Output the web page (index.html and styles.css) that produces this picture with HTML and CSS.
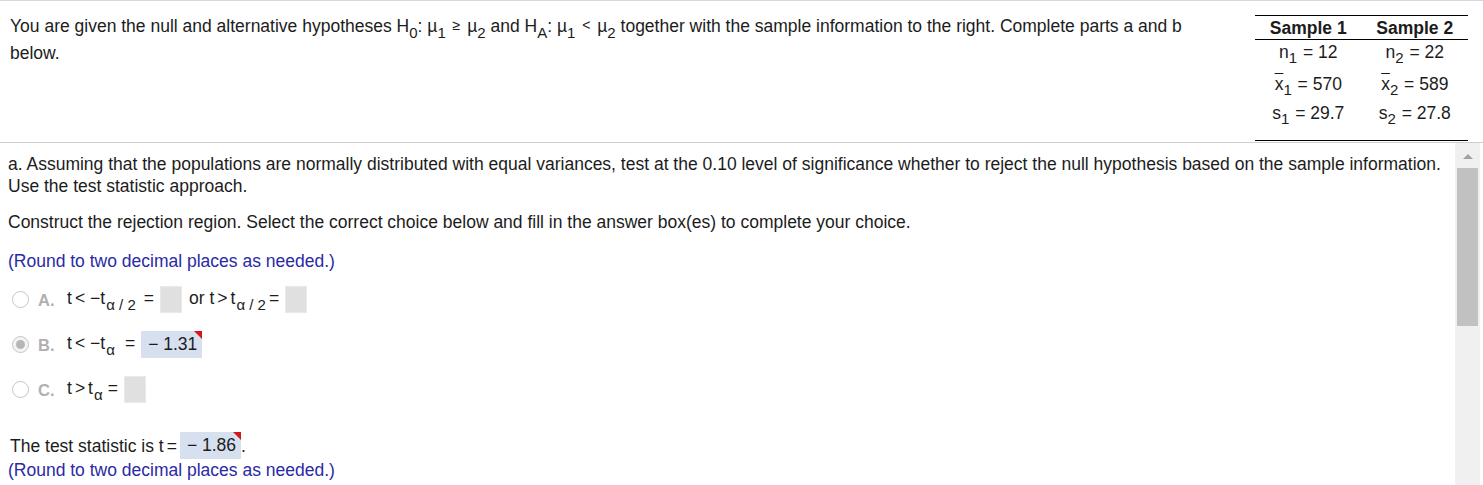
FILE: index.html
```html
<!DOCTYPE html>
<html>
<head>
<meta charset="utf-8">
<link rel="stylesheet" href="styles.css">
</head>
<body>
<div class="page">
  <header class="header">
    <p class="intro">You are given the null and alternative hypotheses H<span class="sub">0</span>: µ<span class="sub">1</span> <span class="rel">≥</span> µ<span class="sub">2</span> and H<span class="sub">A</span>: µ<span class="sub">1</span> <span class="rel">&lt;</span> µ<span class="sub">2</span> together with the sample information to the right. Complete parts a and b below.</p>
    <table class="samples">
      <thead>
        <tr><th>Sample 1</th><th>Sample 2</th></tr>
      </thead>
      <tbody>
        <tr class="row-n"><td>n<span class="tsub">1</span> = 12</td><td>n<span class="tsub">2</span> = 22</td></tr>
        <tr class="row-x"><td><span class="bar">x</span><span class="tsub">1</span> = 570</td><td><span class="bar">x</span><span class="tsub">2</span> = 589</td></tr>
        <tr class="row-s"><td>s<span class="tsub">1</span> = 29.7</td><td>s<span class="tsub">2</span> = 27.8</td></tr>
      </tbody>
    </table>
  </header>
  <section class="work">
    <div class="content">
      <p class="question">a. Assuming that the populations are normally distributed with equal variances, test at the 0.10 level of significance whether to reject the null hypothesis based on the sample information. Use the test statistic approach.</p>
      <p class="prompt">Construct the rejection region. Select the correct choice below and fill in the answer box(es) to complete your choice.</p>
      <p class="hint hint-top">(Round to two decimal places as needed.)</p>
      <div class="options">
        <div class="option">
          <span class="radio"></span><span class="letter">A.</span>
          <span class="expr">t<span class="op">&lt;</span><span class="minus">−</span>t<span class="asub">α / 2</span><span class="eq">=</span></span><span class="box"></span>
          <span class="expr or">or t<span class="op2">&gt;</span>t<span class="asub">α / 2</span><span class="eq tighter">=</span></span><span class="box"></span>
        </div>
        <div class="option">
          <span class="radio checked"></span><span class="letter">B.</span>
          <span class="expr">t<span class="op">&lt;</span><span class="minus">−</span>t<span class="asub single">α</span><span class="eq">=</span></span><span class="answer">− 1.31</span>
        </div>
        <div class="option">
          <span class="radio"></span><span class="letter">C.</span>
          <span class="expr">t<span class="op2">&gt;</span>t<span class="asub">α</span><span class="eq tight">=</span></span><span class="box"></span>
        </div>
      </div>
      <div class="statistic">The test statistic is t<span class="eq">=</span><span class="answer">− 1.86</span>.</div>
      <p class="hint">(Round to two decimal places as needed.)</p>
    </div>
    <div class="scrollbar">
      <div class="arrow"></div>
      <div class="thumb"></div>
    </div>
  </section>
</div>
</body>
</html>
```

FILE: styles.css
```css
html, body {
  margin: 0;
  padding: 0;
  background: #fff;
}
body {
  font-family: "Liberation Sans", Arial, sans-serif;
  font-size: 17.5px;
  color: #1c1c1c;
  overflow: hidden;
}
.page {
  border-top: 1px solid #d3d7e2;
  height: 484px;
  display: flex;
  flex-direction: column;
}
.header {
  display: flex;
  justify-content: space-between;
  align-items: flex-start;
  padding: 0 15px 0 10px;
  height: 141px;
  flex: none;
}
.intro {
  margin: 12px 0 0 0;
  line-height: 26px;
  flex: 1;
  padding-right: 50px;
}
.sub {
  font-size: 15px;
  line-height: 1;
  vertical-align: -6px;
}
.rel {
  font-size: 14px;
  line-height: 1;
  vertical-align: 2px;
  margin: 0 2px;
}
.samples {
  border-collapse: collapse;
  margin-top: 14px;
  width: 213px;
  flex: none;
}
.samples thead th {
  font-weight: bold;
  border-top: 1px solid #000;
  border-bottom: 1px solid #000;
  line-height: 20px;
  padding: 2px 0 1px;
  text-align: center;
}
.samples td {
  text-align: center;
  line-height: 20px;
  padding: 2px 0 4px;
  white-space: nowrap;
}
.samples tr.row-x td {
  padding: 5px 0 4px;
}
.samples tr.row-s td {
  padding: 2px 0 14px;
  border-bottom: 1px solid #000;
}
.tsub {
  font-size: 15px;
  line-height: 1;
  vertical-align: -5px;
  margin-right: 1px;
}
.bar {
  text-decoration: overline;
  text-decoration-thickness: 1px;
}
.work {
  flex: 1;
  display: flex;
  border-top: 1px solid #cfcfcf;
  min-height: 0;
}
.content {
  flex: 1;
  padding: 10px 2px 0 8px;
  line-height: 22px;
}
.content p {
  margin: 0;
}
.prompt {
  margin-top: 14px !important;
}
.hint {
  color: #2a2aa5;
}
.hint-top {
  margin-top: 17px !important;
}
.options {
  margin-top: 14px;
  display: flex;
  flex-direction: column;
  gap: 18px;
}
.option {
  display: flex;
  align-items: center;
  height: 27px;
}
.radio {
  width: 17px;
  height: 17px;
  border: 1px solid #c6c6c6;
  border-radius: 50%;
  margin-left: 4px;
  box-sizing: border-box;
  display: flex;
  align-items: center;
  justify-content: center;
  background: #fff;
  flex: none;
}
.radio.checked {
  background: #f4f4f4;
}
.radio.checked::after {
  content: "";
  width: 9px;
  height: 9px;
  border-radius: 50%;
  background: #b6b6b6;
}
.letter {
  color: #b0b0b0;
  font-weight: bold;
  font-size: 16.5px;
  margin-left: 9px;
  width: 29px;
}
.expr {
  white-space: nowrap;
}
.op {
  margin: 0 5px 0 3px;
}
.op2 {
  margin: 0 3px 0 3px;
}
.asub {
  font-size: 15px;
  line-height: 1;
  vertical-align: -6px;
  margin-left: 1px;
}
.asub.single {
  margin-right: 2px;
}
.eq {
  margin: 0 6px 0 8px;
}
.eq.tight {
  margin-left: 5px;
}
.eq.tighter {
  margin-left: 3px;
}
.box {
  display: inline-block;
  width: 22px;
  height: 27px;
  background: #e0e0e0;
  border: 1px solid #e9e9e9;
  box-sizing: border-box;
  margin-left: 0;
}
.or {
  margin-left: 7px;
}
.answer {
  display: inline-block;
  position: relative;
  background: #d6e0ef;
  height: 27px;
  line-height: 27px;
  padding: 0 5px 0 7px;
  margin-left: 0;
}
.answer::after {
  content: "";
  position: absolute;
  top: 0;
  right: 0;
  border-top: 8px solid #d4161c;
  border-left: 8px solid transparent;
}
.statistic {
  margin-top: 29px;
  display: flex;
  align-items: center;
  height: 27px;
  margin-left: 2px;
}
.statistic .eq {
  margin: 0 3px 0 3px;
}
.scrollbar {
  width: 25px;
  margin-right: 3px;
  background: #f0f0f0;
  display: flex;
  flex-direction: column;
  align-items: center;
  flex: none;
}
.arrow {
  margin-top: 11px;
  width: 0;
  height: 0;
  border-left: 5px solid transparent;
  border-right: 5px solid transparent;
  border-bottom: 5px solid #a3a3a3;
}
.thumb {
  margin-top: 9px;
  width: 21px;
  height: 158px;
  background: #c1c1c1;
}
```
